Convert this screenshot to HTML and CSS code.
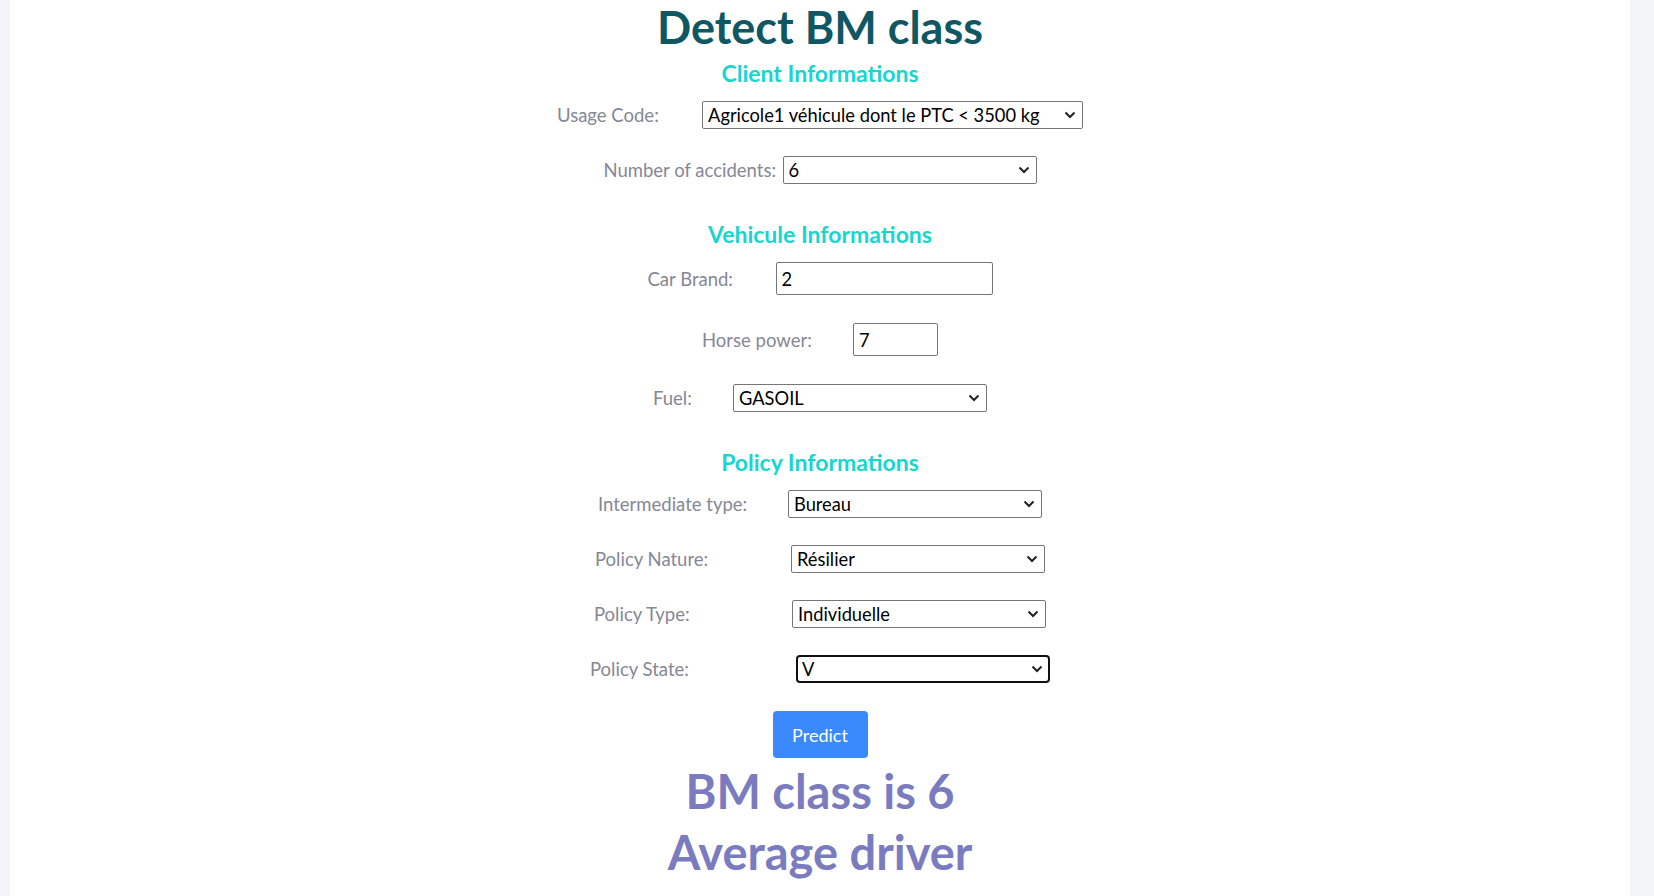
FILE: index.html
```html
<!DOCTYPE html>
<html lang="en">
<head>
    <meta charset="UTF-8">
    <meta name="viewport" content="width=device-width, initial-scale=1.0">
    <title>Detect BM class</title>
    <link rel="stylesheet" href="styles.css">
</head>
<body>
    <div class="painel">
        <form class="formulario">
            <h1 class="titulo">Detect BM class</h1>

            <h3 class="secao">Client Informations</h3>
            <div class="linha">
                <label class="rotulo rotulo-usage" for="usage">Usage Code:</label>
                <select id="usage" class="campo campo-usage">
                    <option>Agricole1 véhicule dont le PTC &lt; 3500 kg</option>
                </select>
            </div>
            <div class="linha">
                <label class="rotulo rotulo-accidents" for="accidents">Number of accidents:</label>
                <select id="accidents" class="campo campo-medio">
                    <option>6</option>
                </select>
            </div>

            <h3 class="secao secao-espaco">Vehicule Informations</h3>
            <div class="linha linha-texto">
                <label class="rotulo rotulo-brand" for="brand">Car Brand:</label>
                <input type="text" id="brand" class="texto texto-brand" value="2">
            </div>
            <div class="linha linha-texto">
                <label class="rotulo rotulo-horse" for="horse">Horse power:</label>
                <input type="text" id="horse" class="texto texto-horse" value="7">
            </div>
            <div class="linha">
                <label class="rotulo rotulo-fuel" for="fuel">Fuel:</label>
                <select id="fuel" class="campo campo-medio">
                    <option>GASOIL</option>
                </select>
            </div>

            <h3 class="secao secao-espaco">Policy Informations</h3>
            <div class="linha">
                <label class="rotulo rotulo-inter" for="inter">Intermediate type:</label>
                <select id="inter" class="campo campo-medio">
                    <option>Bureau</option>
                </select>
            </div>
            <div class="linha">
                <label class="rotulo rotulo-nature" for="nature">Policy Nature:</label>
                <select id="nature" class="campo campo-medio">
                    <option>Résilier</option>
                </select>
            </div>
            <div class="linha">
                <label class="rotulo rotulo-type" for="ptype">Policy Type:</label>
                <select id="ptype" class="campo campo-medio">
                    <option>Individuelle</option>
                </select>
            </div>
            <div class="linha">
                <label class="rotulo rotulo-state" for="state">Policy State:</label>
                <select id="state" class="campo campo-medio campo-foco">
                    <option>V</option>
                </select>
            </div>
        </form>

        <div class="acoes">
            <button type="button" class="botao">Predict</button>
        </div>

        <!-- Resultado da previsao -->
        <div class="resultado">
            <p>BM class is 6</p>
            <p>Average driver</p>
        </div>
    </div>
</body>
</html>
```

FILE: styles.css
```css
* {
    margin: 0;
    padding: 0;
    box-sizing: border-box;
}

body {
    background-color: #f3f5f9;
    font-family: Lato, "Noto Sans", sans-serif;
    color: #858796;
}

.painel {
    background-color: #ffffff;
    margin: 0 24px 0 10px;
    min-height: 100vh;
}

.formulario {
    display: flex;
    flex-direction: column;
    align-items: center;
}

.titulo {
    font-size: 45px;
    font-weight: 700;
    line-height: 54px;
    color: #0f5763;
}

.secao {
    margin-top: 7px;
    margin-bottom: 15px;
    font-size: 23px;
    font-weight: 700;
    line-height: 25px;
    color: #17d6cf;
}

.secao-espaco {
    margin-top: 11px;
}

.linha {
    display: flex;
    align-items: center;
    margin-bottom: 27px;
}

.linha-texto {
    margin-bottom: 28px;
}

.rotulo {
    font-size: 18.5px;
    line-height: 22px;
    color: #858796;
}

/* largura do rotulo = texto + espaco ate o campo */
.rotulo-usage { width: 145px; }
.rotulo-accidents { width: 179px; }
.rotulo-brand { width: 128px; }
.rotulo-horse { width: 151px; }
.rotulo-fuel { width: 80px; }
.rotulo-inter { width: 190px; }
.rotulo-nature { width: 196px; }
.rotulo-type { width: 198px; }
.rotulo-state { width: 206px; }

.campo {
    appearance: none;
    -webkit-appearance: none;
    height: 28px;
    padding: 0 24px 0 5px;
    border: 1px solid #767676;
    border-radius: 2px;
    background-color: #ffffff;
    background-image: url("data:image/svg+xml,%3Csvg xmlns='http://www.w3.org/2000/svg' width='12' height='8' viewBox='0 0 12 8'%3E%3Cpath d='M1.5 1.5l4.5 4.5 4.5-4.5' fill='none' stroke='%23222' stroke-width='2'/%3E%3C/svg%3E");
    background-repeat: no-repeat;
    background-position: right 6px center;
    font-family: inherit;
    font-size: 18.3px;
    color: #000000;
}

.campo-usage { width: 381px; }
.campo-medio { width: 254px; }

.campo-foco {
    border: 2px solid #111111;
    border-radius: 4px;
    padding-left: 4px;
    background-position: right 5px center;
}

.texto {
    height: 33px;
    padding: 0 5px;
    border: 1px solid #767676;
    border-radius: 2px;
    font-family: inherit;
    font-size: 18.3px;
    color: #000000;
}

.texto-brand { width: 217px; }
.texto-horse { width: 85px; }

.acoes {
    display: flex;
    justify-content: center;
    margin-top: 1px;
}

.botao {
    width: 95px;
    height: 47px;
    border: none;
    border-radius: 4px;
    background-color: #3a8afd;
    color: #ffffff;
    font-family: inherit;
    font-size: 18px;
}

.resultado {
    margin-top: 3px;
    text-align: center;
    font-size: 47px;
    font-weight: 700;
    line-height: 61px;
    color: #7b7bbf;
}
```
